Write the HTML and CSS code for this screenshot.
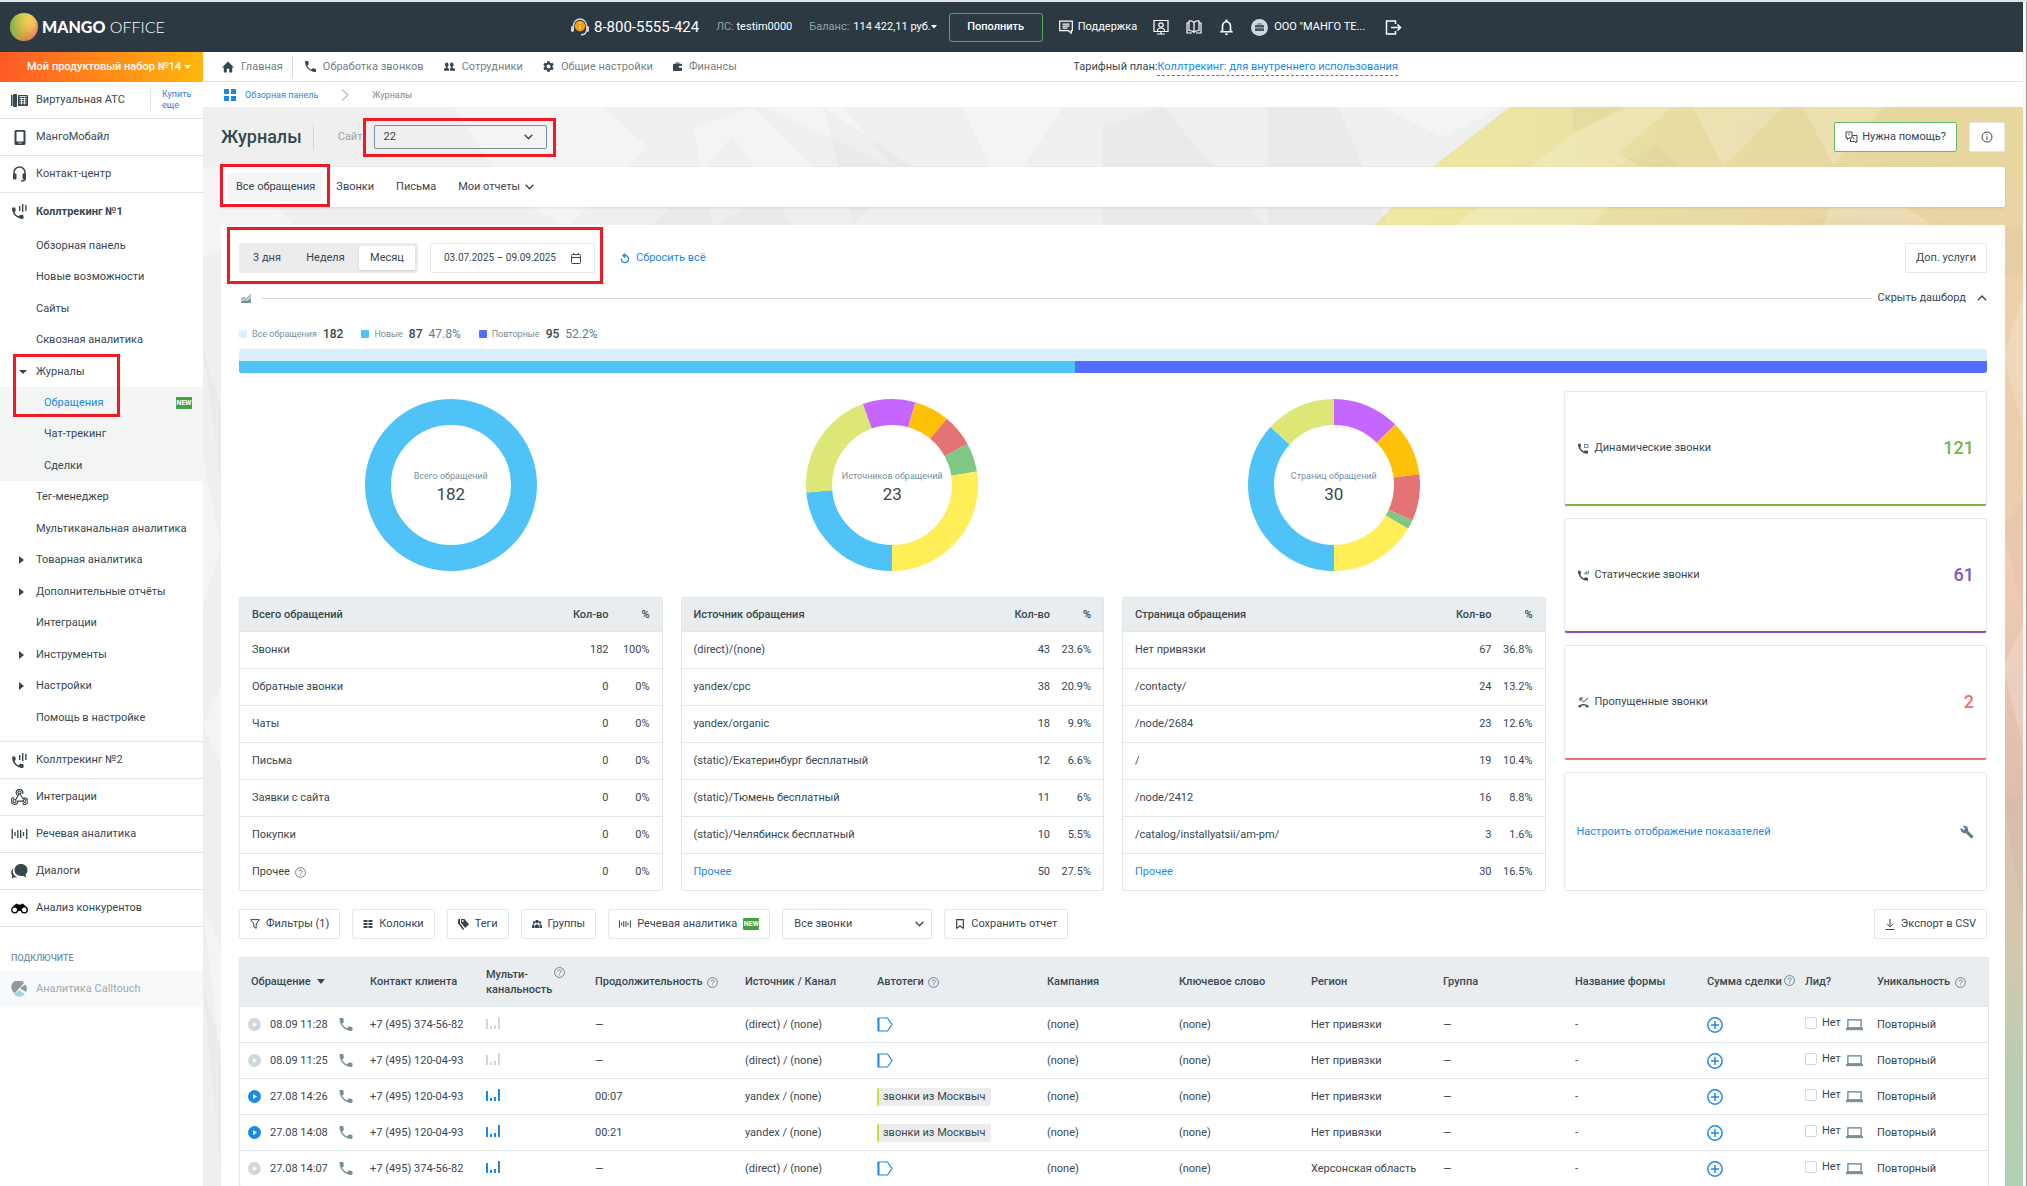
FILE: index.html
```html
<!DOCTYPE html>
<html lang="ru">
<head>
<meta charset="utf-8">
<title>Журналы</title>
<link rel="stylesheet" href="styles.css">
</head>
<body>
<svg class="sprite" aria-hidden="true">
  <symbol id="i-phone" viewBox="3 3 18 18"><path d="M6.62 10.79c1.44 2.83 3.76 5.14 6.59 6.59l2.2-2.2c.27-.27.67-.36 1.02-.24 1.12.37 2.33.57 3.57.57.55 0 1 .45 1 1V20c0 .55-.45 1-1 1-9.39 0-17-7.61-17-17 0-.55.45-1 1-1h3.5c.55 0 1 .45 1 1 0 1.25.2 2.45.57 3.57.11.35.03.74-.25 1.02l-2.2 2.2z"/></symbol>
  <symbol id="i-home" viewBox="2 3 20 18"><path d="M10 21v-6h4v6h5v-8h3L12 3 2 13h3v8z"/></symbol>
  <symbol id="i-gear" viewBox="2 2 20 20"><path d="M19.14 12.94c.04-.3.06-.61.06-.94 0-.32-.02-.64-.07-.94l2.03-1.58c.18-.14.23-.41.12-.61l-1.92-3.32c-.12-.22-.37-.29-.59-.22l-2.39.96c-.5-.38-1.03-.7-1.62-.94l-.36-2.54c-.04-.24-.24-.41-.48-.41h-3.84c-.24 0-.43.17-.47.41l-.36 2.54c-.59.24-1.13.57-1.62.94l-2.39-.96c-.22-.08-.47 0-.59.22L2.74 8.87c-.12.21-.08.47.12.61l2.03 1.58c-.05.3-.09.63-.09.94s.02.64.07.94l-2.03 1.58c-.18.14-.23.41-.12.61l1.92 3.32c.12.22.37.29.59.22l2.39-.96c.5.38 1.03.7 1.62.94l.36 2.54c.05.24.24.41.48.41h3.84c.24 0 .44-.17.47-.41l.36-2.54c.59-.24 1.13-.56 1.62-.94l2.39.96c.22.08.47 0 .59-.22l1.92-3.32c.12-.22.07-.47-.12-.61l-2.01-1.58zM12 15.6c-1.98 0-3.6-1.62-3.6-3.6s1.62-3.6 3.6-3.6 3.6 1.62 3.6 3.6-1.62 3.6-3.6 3.6z"/></symbol>
  <symbol id="i-staff" viewBox="0 0 12 10"><path d="M3 0a2 2.4 0 0 1 1 4.5V6l1.500 1V9H0V7l2-1V4.500A2 2.400 0 0 1 3 0zM8.500 0a2 2.400 0 0 1 1 4.500V6L12 7v2H6.500V7l1-1V4.500a2 2.400 0 0 1 1-4.500z"/></symbol>
  <symbol id="i-case" viewBox="0 0 10 10"><path d="M3 2V.5h4V2h2a1 1 0 0 1 1 1v1.500H6.500v2H10V9a1 1 0 0 1-1 1H1a1 1 0 0 1-1-1V3a1 1 0 0 1 1-1zM4 1.300V2h2v-.7z"/></symbol>
  <symbol id="i-grid" viewBox="0 0 12 12"><path d="M0 0h5v5H0zM7 0h5v5H7zM0 7h5v5H0zM7 7h5v5H7z"/></symbol>
  <symbol id="i-calltrack" viewBox="0 0 17 17"><path d="M3.500 9.200c.8 1.800 2.200 3.200 4 4.100l1.500-1.300c.2-.2.5-.3.8-.2.600.2 1.300.3 2 .3.400 0 .7.300.7.700v2.500c0 .4-.3.7-.7.7C6 16 1 11 1 5.300c0-.4.300-.7.700-.7h2c.4 0 .7.300.7.700 0 .7.100 1.400.3 2 .1.300 0 .6-.2.800z"/><path d="M8 3h1.400v5H8zM11 1h1.400v8H11zM14.200 2h1.400v6h-1.400z"/></symbol>
  <symbol id="i-q" viewBox="0 0 12 12"><circle cx="6" cy="6" r="5.400" fill="none" stroke="currentColor"/><path d="M4.300 4.900c0-2.300 3.500-2.200 3.500-.1C7.800 6 6.100 6 6.100 7.300M6.100 8.300v1" fill="none" stroke="currentColor"/></symbol>
  <symbol id="i-voice" viewBox="0 0 16 10"><path d="M.7 0v10M3.500 3v4M6.300 1v8M9.200 1v8M12 3v4M15.200 0v10" stroke="currentColor" stroke-width="1.300" fill="none"/></symbol>
  <symbol id="i-play" viewBox="0 0 13 13"><circle cx="6.500" cy="6.500" r="6.500"/><path d="M5 4v5l4-2.500z" fill="#fff"/></symbol>
  <symbol id="i-bars" viewBox="0 0 14 12"><path d="M0 2h2v10H0zM4 9h2v3H4zM8 8h2v4H8zM12 0h2v12h-2z"/></symbol>
  <symbol id="i-tag" viewBox="0 0 16 15"><path d="M1 1h9.500l4.500 6.500-4.500 6.500H1z" fill="none" stroke="currentColor" stroke-width="1.200"/><path d="M1 1h1.500v13H1z"/></symbol>
  <symbol id="i-plus" viewBox="0 0 16 16"><circle cx="8" cy="8" r="7.200" fill="none" stroke="currentColor" stroke-width="1.500"/><path d="M8 4v8M4 8h8" stroke="currentColor" stroke-width="1.500"/></symbol>
  <symbol id="i-laptop" viewBox="0 0 18 13"><path d="M2 1.500h14V10H2z" fill="none" stroke="currentColor" stroke-width="1.300"/><path d="M0 10h18v2.500H0z"/></symbol>
</svg>

<div class="app">
<header class="top">
  <a class="logo" href="#"><svg width="28" height="28" viewBox="0 0 28 28"><defs><radialGradient id="mg" cx=".55" cy=".2" r=".85"><stop offset="0" stop-color="#fbd84c"/><stop offset=".45" stop-color="#f3b04f"/><stop offset="1" stop-color="#d9544c"/></radialGradient><linearGradient id="mg2"><stop offset="0" stop-color="#6fb84c"/><stop offset=".6" stop-color="#c9cf45" stop-opacity=".3"/><stop offset="1" stop-color="#fff" stop-opacity="0"/></linearGradient></defs><circle cx="14" cy="14" r="14" fill="url(#mg)"/><circle cx="14" cy="14" r="14" fill="url(#mg2)"/></svg><span class="logo-text"><b>MANGO</b> OFFICE</span></a>
  <div class="top-info">
    <svg class="headset" width="18" height="18" viewBox="0 0 18 18"><path d="M2.500 9V7.500a6.500 6.500 0 0 1 13 0V9M15.500 12c0 3-2 4.800-5.500 4.800" fill="none" stroke="#cfd8dc" stroke-width="1.400"/><rect x="0" y="8" width="3" height="6" rx="1.400" fill="#cfd8dc"/><rect x="15" y="8" width="3" height="6" rx="1.400" fill="#cfd8dc"/><circle cx="9" cy="8" r="5.200" fill="#f90"/><path d="M9 4.500v1.200M9 7v4" stroke="#fff" stroke-width="1.300"/></svg>
    <span class="tel">8-800-5555-424</span>
    <span class="acc"><i>ЛС:</i> testim0000</span>
    <button class="balance" type="button"><i>Баланс:</i> <span>114 422,11 руб.</span><svg width="6" height="4" viewBox="0 0 6 4"><path d="M0 0h6L3 3.500z"/></svg></button>
    <button class="pay" type="button">Пополнить</button>
    <a class="support" href="#"><svg width="14" height="14" viewBox="0 0 14 14" fill="none" stroke="currentColor" stroke-width="1.200"><path d="M.7 1.200h12.600v9.500h-1v2.500l-3-2.500H.7zM3.500 4.200h7M3.500 6.200h7M3.500 8.200h5"/></svg>Поддержка</a>
    <a class="ico" href="#" aria-label="Обучение"><svg width="16" height="16" viewBox="0 0 16 16" fill="none" stroke="currentColor" stroke-width="1.200"><path d="M1 1.500h14v11H1zM4 15h8M8 12.500V15M4.500 12c0-4 7-4 7 0"/><circle cx="8" cy="6" r="2.200"/></svg></a>
    <a class="ico" href="#" aria-label="Справка"><svg width="16" height="14" viewBox="0 0 16 14" fill="none" stroke="currentColor" stroke-width="1.200"><path d="M8 12.500V2.500C6.500.8 4.500.8 3 1v9.500c2 0 3.800.3 5 2 1.200-1.700 3-2 5-2V1c-1.500-.2-3.500-.2-5 1.500M3 3H1v10h5M13 3h2v10h-5"/></svg></a>
    <a class="ico" href="#" aria-label="Уведомления"><svg width="15" height="16" viewBox="3 2 18 20"><path d="M12 22c1.100 0 2-.9 2-2h-4c0 1.100.89 2 2 2zm6-6v-5c0-3.070-1.640-5.640-4.500-6.320V4c0-.83-.67-1.500-1.500-1.500s-1.500.67-1.500 1.500v.68C7.630 5.360 6 7.920 6 11v5l-2 2v1h16v-1l-2-2zm-2 1H8v-6c0-2.480 1.510-4.500 4-4.500s4 2.020 4 4.500v6z"/></svg></a>
    <a class="user" href="#"><svg width="17" height="17" viewBox="0 0 17 17"><circle cx="8.500" cy="8.500" r="8.500" fill="#cfd8dc"/><path d="M4 6h2.500V4.500h4V6H13v6H4zM7.300 5.300V6h2.400v-.7zM4 8.500h9v.7H4z" fill="#455a64" fill-rule="evenodd"/></svg>ООО "МАНГО ТЕ...</a>
    <a class="exit" href="#" aria-label="Выход"><svg width="17" height="15" viewBox="0 0 17 15" fill="none" stroke="currentColor" stroke-width="1.500"><path d="M10.500 4V1H1.500v13h9v-3M6 7.500h9.500M12.500 4.500l3 3-3 3"/></svg></a>
  </div>
</header>

<aside class="side">
  <button class="product" type="button"><span>Мой продуктовый набор №14</span><svg width="7" height="4" viewBox="0 0 7 4"><path d="M0 0h7L3.500 4z"/></svg></button>
  <ul class="menu">
    <li class="menu-split"><a href="#"><svg width="17" height="13" viewBox="0 0 17 13"><rect x="0" y="1" width="1.500" height="11"/><rect x="2" y="0" width="4" height="13" rx="1"/><path d="M7 1h9a1 1 0 0 1 1 1v9a1 1 0 0 1-1 1H7z"/><path d="M8.500 4.500h7M8.500 6.700h7M8.500 9h7M10.500 3.500v7M13.500 3.500v7M8.500 2.500h7" stroke="#fff" stroke-width=".8"/></svg>Виртуальная АТС</a><a class="buy" href="#">Купить еще</a></li>
    <li><a href="#"><svg width="17" height="15" viewBox="0 0 17 15"><path d="M5 0h8a1.500 1.500 0 0 1 1.500 1.500v12A1.500 1.500 0 0 1 13 15H5a1.500 1.500 0 0 1-1.500-1.500v-12A1.500 1.500 0 0 1 5 0zm.5 1.800v9.700h7V1.800zm2 10.900v.9h3v-.9z" fill-rule="evenodd"/></svg>МангоМобайл</a></li>
    <li><a href="#"><svg width="17" height="16" viewBox="0 0 17 16"><path d="M3 9V6.500a5.500 5.500 0 0 1 11 0V13q0 2-4 2" fill="none" stroke="#37474f" stroke-width="1.500"/><rect x="2" y="7.500" width="3.500" height="6" rx="1"/><rect x="11.500" y="7.500" width="3.500" height="6" rx="1"/></svg>Контакт-центр</a></li>
    <li class="open"><a class="strong" href="#"><svg width="17" height="17"><use href="#i-calltrack"/></svg>Коллтрекинг №1</a>
      <ul class="sub">
        <li><a href="#">Обзорная панель</a></li>
        <li><a href="#">Новые возможности</a></li>
        <li><a href="#">Сайты</a></li>
        <li><a href="#">Сквозная аналитика</a></li>
        <li class="mark mark-journal"><a class="down" href="#">Журналы</a>
          <ul class="nested">
            <li><a class="current" href="#">Обращения<span class="new">NEW</span></a></li>
            <li><a href="#">Чат-трекинг</a></li>
            <li><a href="#">Сделки</a></li>
          </ul>
        </li>
        <li><a href="#">Тег-менеджер</a></li>
        <li><a href="#">Мультиканальная аналитика</a></li>
        <li><a class="right" href="#">Товарная аналитика</a></li>
        <li><a class="right" href="#">Дополнительные отчёты</a></li>
        <li><a href="#">Интеграции</a></li>
        <li><a class="right" href="#">Инструменты</a></li>
        <li><a class="right" href="#">Настройки</a></li>
        <li><a href="#">Помощь в настройке</a></li>
      </ul>
    </li>
    <li><a href="#"><svg width="17" height="17"><use href="#i-calltrack"/></svg>Коллтрекинг №2</a></li>
    <li><a href="#"><svg width="17" height="16" viewBox="0 0 17 16" fill="none" stroke="#37474f" stroke-width="1.200"><circle cx="8.500" cy="3.500" r="1.500"/><circle cx="3.500" cy="12" r="1.500"/><circle cx="13.500" cy="12" r="1.500"/><path d="M5.800 5.500A3.300 3.300 0 1 1 11.500 5M8.500 4.500l3.500 5a3.200 3.200 0 1 1-.5 5M8 5l-3.500 6M3.500 8.700a3.300 3.300 0 1 0 3.300 3.500h6.500M5.800 5.500L7 7"/></svg>Интеграции</a></li>
    <li><a href="#"><svg width="17" height="10"><use href="#i-voice"/></svg>Речевая аналитика</a></li>
    <li><a href="#"><svg width="17" height="15" viewBox="0 0 17 15"><path d="M10 0c3.600 0 6.500 2.600 6.500 6 0 2-1 3.600-2 4.500l1 3-3.500-1.800c-4.500 1-8.500-1.700-8.500-5.700 0-3.400 2.900-6 6.500-6z"/><path d="M2.500 4.500C1 7 1.500 11 6 13.200c-1 .4-2 .3-3 0L.8 14.800l.4-3C-.5 9.500 0 6 2.500 4.500z"/></svg>Диалоги</a></li>
    <li><a href="#"><svg width="17" height="11" viewBox="0 0 17 11"><path d="M3 2.500L5.500.5l1.500 1h3l1.500-1L14 2.500l1.500 2.500-5 .5V8h-4V5.500L1.500 5z" fill="#000"/><g fill="#fff" stroke="#000" stroke-width="1.300"><circle cx="3.700" cy="6.800" r="3"/><circle cx="13.300" cy="6.800" r="3"/></g></svg>Анализ конкурентов</a></li>
  </ul>
  <h2 class="side-title">Подключите</h2>
  <a class="connect" href="#"><svg width="17" height="16" viewBox="0 0 17 16"><path d="M1.500 10A7 7 0 0 1 13 2L3.500 12.500z" fill="#8f9a9f"/><path d="M14.500 3.500A7 7 0 0 1 14.800 11L9 7z" fill="#8f9a9f"/><path d="M8.500 9l5.500 4.500q-5.500 4.500-11 0z" fill="#9fd4e4"/></svg>Аналитика Calltouch</a>
</aside>

<div class="content">
  <nav class="nav">
    <a class="first" href="#"><svg width="12" height="12"><use href="#i-home"/></svg>Главная</a>
    <a href="#"><svg width="11" height="11"><use href="#i-phone"/></svg>Обработка звонков</a>
    <a href="#"><svg width="11" height="10"><use href="#i-staff"/></svg>Сотрудники</a>
    <a href="#"><svg width="11" height="11"><use href="#i-gear"/></svg>Общие настройки</a>
    <a href="#"><svg width="9" height="9"><use href="#i-case"/></svg>Финансы</a>
    <p class="plan">Тарифный план:<a href="#">Коллтрекинг: для внутреннего использования</a></p>
  </nav>
  <nav class="crumbs">
    <a href="#"><svg width="12" height="12"><use href="#i-grid"/></svg>Обзорная панель</a>
    <svg width="8" height="12" viewBox="0 0 8 12"><path d="M1 .5L7 6l-6 5.500" fill="none" stroke="#b0bec5" stroke-width="1.200"/></svg>
    <span>Журналы</span>
  </nav>
  <main class="stage">
    <svg class="poly" viewBox="0 0 1820 1080" preserveAspectRatio="none" aria-hidden="true">
      <defs>
        <linearGradient id="warm" x1="0" y1="0" x2="0" y2="1"><stop offset="0" stop-color="#e6d89c"/><stop offset=".15" stop-color="#ecd2a8"/><stop offset=".45" stop-color="#eecab2"/><stop offset=".62" stop-color="#e0bfae"/><stop offset=".78" stop-color="#d3c8ae"/><stop offset=".9" stop-color="#b9cdb0"/><stop offset="1" stop-color="#b0d0b4"/></linearGradient>
        <linearGradient id="lemon"><stop offset="0" stop-color="#f1eca0"/><stop offset=".4" stop-color="#ebe3a4"/><stop offset="1" stop-color="#e6d4a0" stop-opacity="0"/></linearGradient>
      </defs>
      <rect width="1820" height="1080" fill="#efefef"/>
      <path d="M1307 0h513v1080H1000L1172 118L1230 60z" fill="url(#warm)"/>
      <path d="M1307 0h500v300H1050L1172 118L1230 60z" fill="url(#lemon)"/>
      <g fill="#fff" opacity=".3">
        <path d="M250 0l150 0 45 40-80 80-55-30zM0 60l40 0 60 70-100 20zM490 20l60-20 60 60-100 60zM760 0l40 90 60-90zM1180 0h120l-60 30zM560 0h80l50 60zM0 350l18 90-18 60zM0 620l18-40v80zM0 800l18 40v120z"/>
      </g>
      <g fill="#000" opacity=".02">
        <path d="M450 118l80-90 60 90zM620 0l90 60-60 58zM900 20l60-20 100 118h-160zM1065 0h70l50 120h-120zM1370 0h60l-60 27zM1410 60l45-22 40 40-90-8zM1350 120l20 60h120l-20-60zM1560 130l60-20 200 10v50h-270zM1800 420l20-30v120zM1800 690h20v120zM0 240l18 60v80zM0 880l18 60v130z"/>
      </g>
      <g fill="#fff" opacity=".18">
        <path d="M1370 27l50-27h50l-60 50zM1490 0l30 60 60-60zM1600 0h80l-50 58zM1250 120l120-93 75 35-60 58zM1640 60l90 58h-110zM1800 250l20-60v130zM1800 560l20-40v120z"/>
      </g>
    </svg>
    <div class="title-row">
      <h1>Журналы</h1>
      <label class="site">Сайт <span class="mark mark-site"><select><option>22</option></select></span></label>
      <button class="btn help" type="button"><svg width="13" height="13" viewBox="0 0 13 13" fill="none" stroke="#37474f"><path d="M1 1h6v6H4L2.500 8.500V7H1zM7.500 4.500H12v6h-1V12l-1.500-1.500H5.500V8M4 2.500v2M8.800 6.500v2"/></svg>Нужна помощь?</button>
      <button class="btn info" type="button" aria-label="Информация"><svg width="12" height="12" viewBox="0 0 12 12"><circle cx="6" cy="6" r="5" fill="none" stroke="#37474f"/><path d="M6 3v1M6 5.200V9" stroke="#37474f"/></svg></button>
    </div>
    <nav class="tabs">
      <a class="on mark mark-tab" href="#">Все обращения</a>
      <a href="#">Звонки</a>
      <a href="#">Письма</a>
      <a href="#">Мои отчеты<svg width="9" height="6" viewBox="0 0 9 6"><path d="M.7.7l3.800 4L8.300.7" fill="none" stroke="#37474f" stroke-width="1.300"/></svg></a>
    </nav>

    <section class="panel">
      <div class="period">
        <div class="mark mark-period">
          <div class="seg"><button type="button">3 дня</button><button type="button">Неделя</button><button class="on" type="button">Месяц</button></div>
          <label class="date"><input type="text" value="03.07.2025 – 09.09.2025" aria-label="Период"><svg width="10" height="11" viewBox="0 0 10 11" fill="none" stroke="#37474f"><rect x=".5" y="1.500" width="9" height="9" rx="1"/><path d="M.5 4.500h9M2.500 0v2M7.500 0v2"/></svg></label>
        </div>
        <button class="reset" type="button"><svg width="10" height="11" viewBox="0 0 10 11" fill="none" stroke="currentColor" stroke-width="1.300"><path d="M1.500 5.500A3.600 3.600 0 1 0 5 2.500H3M5 .5L3 2.500l2 2"/></svg>Сбросить всё</button>
        <button class="btn extra" type="button">Доп. услуги</button>
      </div>
      <div class="fold">
        <svg width="10" height="10" viewBox="0 0 10 10"><path d="M0 5l3-1.500L5 5l5-4.500V4L5.500 7.500l-2-1L0 8z" fill="#b0bec5"/><path d="M0 8.500L3.500 7l2 1L10 5v5H0z" fill="#78909c"/></svg>
        <span class="rule"></span>
        <button type="button">Скрыть дашборд<svg width="10" height="6" viewBox="0 0 10 6"><path d="M1 5.300l4-4.300 4 4.300" fill="none" stroke="#37474f" stroke-width="1.300"/></svg></button>
      </div>
      <div class="legend">
        <p><i class="c-all"></i>Все обращения<b>182</b></p>
        <p><i class="c-new"></i>Новые<b>87</b><em>47.8%</em></p>
        <p><i class="c-rep"></i>Повторные<b>95</b><em>52.2%</em></p>
      </div>
      <div class="bars"><div class="bar-all"></div><div class="bar-split"><span style="width:47.8%"></span></div></div>

      <div class="dash">
        <div class="col">
          <div class="donut"><svg width="172" height="172" viewBox="0 0 172 172"><circle cx="86" cy="86" r="73" stroke="#4fc3f7"/></svg><p>Всего обращений<b>182</b></p></div>
          <table class="stat">
            <thead><tr><th>Всего обращений</th><th>Кол-во</th><th>%</th></tr></thead>
            <tbody>
            <tr><td>Звонки</td><td>182</td><td>100%</td></tr>
            <tr><td>Обратные звонки</td><td>0</td><td>0%</td></tr>
            <tr><td>Чаты</td><td>0</td><td>0%</td></tr>
            <tr><td>Письма</td><td>0</td><td>0%</td></tr>
            <tr><td>Заявки с сайта</td><td>0</td><td>0%</td></tr>
            <tr><td>Покупки</td><td>0</td><td>0%</td></tr>
            <tr><td>Прочее <svg class="q"><use href="#i-q"/></svg></td><td>0</td><td>0%</td></tr>
            </tbody>
          </table>
        </div>
        <div class="col">
          <div class="donut"><svg width="172" height="172" viewBox="0 0 172 172"><g transform="rotate(90 86 86)">
            <circle cx="86" cy="86" r="73" pathLength="100" stroke="#4fc3f7" stroke-dasharray="23.6 100"/>
            <circle cx="86" cy="86" r="73" pathLength="100" stroke="#dce775" stroke-dasharray="20.9 100" stroke-dashoffset="-23.6"/>
            <circle cx="86" cy="86" r="73" pathLength="100" stroke="#c566ff" stroke-dasharray="9.9 100" stroke-dashoffset="-44.5"/>
            <circle cx="86" cy="86" r="73" pathLength="100" stroke="#ffc107" stroke-dasharray="6.6 100" stroke-dashoffset="-54.4"/>
            <circle cx="86" cy="86" r="73" pathLength="100" stroke="#e57373" stroke-dasharray="6 100" stroke-dashoffset="-61"/>
            <circle cx="86" cy="86" r="73" pathLength="100" stroke="#81c784" stroke-dasharray="5.5 100" stroke-dashoffset="-67"/>
            <circle cx="86" cy="86" r="73" pathLength="100" stroke="#ffee58" stroke-dasharray="27.5 100" stroke-dashoffset="-72.5"/>
          </g></svg><p>Источников обращений<b>23</b></p></div>
          <table class="stat">
            <thead><tr><th>Источник обращения</th><th>Кол-во</th><th>%</th></tr></thead>
            <tbody>
            <tr><td>(direct)/(none)</td><td>43</td><td>23.6%</td></tr>
            <tr><td>yandex/cpc</td><td>38</td><td>20.9%</td></tr>
            <tr><td>yandex/organic</td><td>18</td><td>9.9%</td></tr>
            <tr><td>(static)/Екатеринбург бесплатный</td><td>12</td><td>6.6%</td></tr>
            <tr><td>(static)/Тюмень бесплатный</td><td>11</td><td>6%</td></tr>
            <tr><td>(static)/Челябинск бесплатный</td><td>10</td><td>5.5%</td></tr>
            <tr><td><a href="#">Прочее</a></td><td>50</td><td>27.5%</td></tr>
            </tbody>
          </table>
        </div>
        <div class="col">
          <div class="donut"><svg width="172" height="172" viewBox="0 0 172 172"><g transform="rotate(90 86 86)">
            <circle cx="86" cy="86" r="73" pathLength="100" stroke="#4fc3f7" stroke-dasharray="36.8 100"/>
            <circle cx="86" cy="86" r="73" pathLength="100" stroke="#dce775" stroke-dasharray="13.2 100" stroke-dashoffset="-36.8"/>
            <circle cx="86" cy="86" r="73" pathLength="100" stroke="#c566ff" stroke-dasharray="12.6 100" stroke-dashoffset="-50"/>
            <circle cx="86" cy="86" r="73" pathLength="100" stroke="#ffc107" stroke-dasharray="10.4 100" stroke-dashoffset="-62.6"/>
            <circle cx="86" cy="86" r="73" pathLength="100" stroke="#e57373" stroke-dasharray="8.8 100" stroke-dashoffset="-73"/>
            <circle cx="86" cy="86" r="73" pathLength="100" stroke="#81c784" stroke-dasharray="1.700 100" stroke-dashoffset="-81.8"/>
            <circle cx="86" cy="86" r="73" pathLength="100" stroke="#ffee58" stroke-dasharray="16.500 100" stroke-dashoffset="-83.500"/>
          </g></svg><p>Страниц обращений<b>30</b></p></div>
          <table class="stat">
            <thead><tr><th>Страница обращения</th><th>Кол-во</th><th>%</th></tr></thead>
            <tbody>
            <tr><td>Нет привязки</td><td>67</td><td>36.8%</td></tr>
            <tr><td>/contacty/</td><td>24</td><td>13.2%</td></tr>
            <tr><td>/node/2684</td><td>23</td><td>12.6%</td></tr>
            <tr><td>/</td><td>19</td><td>10.4%</td></tr>
            <tr><td>/node/2412</td><td>16</td><td>8.8%</td></tr>
            <tr><td>/catalog/installyatsii/am-pm/</td><td>3</td><td>1.6%</td></tr>
            <tr><td><a href="#">Прочее</a></td><td>30</td><td>16.5%</td></tr>
            </tbody>
          </table>
        </div>
        <div class="kpis">
          <div class="kpi green"><svg width="11" height="11" viewBox="0 0 11 11"><path d="M2.200 4.500c.7 1.800 2 3.200 3.800 4l1-1.200L10 8v2.500C4.500 11 0 6.500 0 .7h2.500l.5 2.800z"/><path d="M6 1h4.500v4H6zM7 2v2h2.500V2z" fill="#78909c"/></svg>Динамические звонки<b>121</b></div>
          <div class="kpi violet"><svg width="11" height="11" viewBox="0 0 11 11"><path d="M2.200 4.500c.7 1.800 2 3.200 3.800 4l1-1.200L10 8v2.500C4.500 11 0 6.500 0 .7h2.500l.5 2.800z"/><path d="M5.500 4l4-3.500v4zM10 .5h.8v4H10z" fill="#78909c"/></svg>Статические звонки<b>61</b></div>
          <div class="kpi red"><svg width="11" height="11" viewBox="0 0 11 11"><path d="M0 9.500C2 6 9 6 11 9.500l-1.500 1.300L7.500 9.500V8.400h-4v1.100l-2 1.300z"/><path d="M2 4V1h3M2 1l3.500 4L10 .8" fill="none" stroke="#37474f"/></svg>Пропущенные звонки<b>2</b></div>
          <div class="kpi"><a href="#">Настроить отображение показателей</a><svg class="wrench" width="14" height="14" viewBox="0 0 24 24"><path d="M22.700 19l-9.100-9.100c.9-2.300.4-5-1.500-6.900-2-2-5-2.400-7.400-1.300L9 6 6 9 1.600 4.700C.4 7.100.9 10.100 2.900 12.100c1.900 1.900 4.600 2.400 6.900 1.500l9.100 9.100c.4.4 1 .4 1.400 0l2.300-2.300c.5-.4.5-1.100.1-1.400z"/></svg></div>
        </div>
      </div>

      <div class="tools">
        <button class="btn" type="button"><svg width="10" height="10" viewBox="0 0 10 10"><path d="M.7.6h8.600L6.200 5v4.300L3.800 8V5z" fill="none" stroke="#37474f"/></svg>Фильтры (1)</button>
        <button class="btn" type="button"><svg width="10" height="10" viewBox="0 0 10 10"><path d="M.5 1h4v2h-4zM5.500 1h4v2h-4zM.5 4h4v2h-4zM5.500 4h4v2h-4zM.5 7h4v2h-4zM5.500 7h4v2h-4z"/></svg>Колонки</button>
        <button class="btn" type="button"><svg width="11" height="11" viewBox="0 0 11 11"><path d="M0 1v3.500l5 6.500 1.200-1L2 4.500V0H1a1 1 0 0 0-1 1z"/><path d="M3 0h3.500L11 5.200 7.200 9 3 4z"/><circle cx="4.800" cy="1.900" r=".9" fill="#fff"/></svg>Теги</button>
        <button class="btn" type="button"><svg width="10" height="10" viewBox="0 0 10 10"><circle cx="2" cy="3.500" r="1.300"/><circle cx="8" cy="3.500" r="1.300"/><circle cx="5" cy="2.500" r="1.800"/><path d="M0 7.500c0-2 1.500-2.300 2.500-2.200L2 9H0zM10 7.500c0-2-1.500-2.300-2.500-2.200L8 9h2zM2.500 9c0-5 5-5 5 0z"/></svg>Группы</button>
        <button class="btn" type="button"><svg width="12" height="8"><use href="#i-voice"/></svg>Речевая аналитика<span class="new">NEW</span></button>
        <select class="calls" aria-label="Тип звонков"><option>Все звонки</option></select>
        <button class="btn" type="button"><svg width="10" height="10" viewBox="0 0 10 10"><path d="M1.700.6h6.600v8.600L5 7 1.700 9.200z" fill="none" stroke="#37474f" stroke-width="1.200"/></svg>Сохранить отчет</button>
        <button class="btn export" type="button"><svg width="10" height="11" viewBox="0 0 10 11" fill="none" stroke="#37474f"><path d="M5 0v7.500M2 4.800l3 3 3-3M.5 10.500h9"/></svg>Экспорт в CSV</button>
      </div>

      <table class="log">
        <colgroup><col class="w119"><col class="w116"><col class="w109"><col class="w150"><col class="w132"><col class="w170"><col class="w132"><col class="w132"><col class="w132"><col class="w132"><col class="w132"><col class="w98"><col class="w72"><col class="w122"></colgroup>
        <thead><tr>
          <th>Обращение <svg class="sort" width="8" height="5" viewBox="0 0 8 5"><path d="M0 0h8L4 5z"/></svg></th><th>Контакт клиента</th><th><span class="multi"><span>Мульти-канальность</span><svg class="q"><use href="#i-q"/></svg></span></th><th>Продолжительность <svg class="q"><use href="#i-q"/></svg></th><th>Источник / Канал</th><th>Автотеги <svg class="q"><use href="#i-q"/></svg></th><th>Кампания</th><th>Ключевое слово</th><th>Регион</th><th>Группа</th><th>Название формы</th><th class="tight">Сумма сделки<svg class="q"><use href="#i-q"/></svg></th><th>Лид?</th><th>Уникальность <svg class="q"><use href="#i-q"/></svg></th>
        </tr></thead>
        <tbody>
        <tr><td><span class="when"><svg class="play"><use href="#i-play"/></svg><span>08.09 11:28</span><svg class="ph"><use href="#i-phone"/></svg></span></td><td>+7 (495) 374-56-82</td><td><svg class="mc off"><use href="#i-bars"/></svg></td><td>—</td><td>(direct) / (none)</td><td><svg class="tagi"><use href="#i-tag"/></svg></td><td>(none)</td><td>(none)</td><td>Нет привязки</td><td>—</td><td>-</td><td><svg class="plus"><use href="#i-plus"/></svg></td><td><span class="lead"><label><input type="checkbox">Нет</label><svg><use href="#i-laptop"/></svg></span></td><td>Повторный</td></tr>
        <tr><td><span class="when"><svg class="play"><use href="#i-play"/></svg><span>08.09 11:25</span><svg class="ph"><use href="#i-phone"/></svg></span></td><td>+7 (495) 120-04-93</td><td><svg class="mc off"><use href="#i-bars"/></svg></td><td>—</td><td>(direct) / (none)</td><td><svg class="tagi"><use href="#i-tag"/></svg></td><td>(none)</td><td>(none)</td><td>Нет привязки</td><td>—</td><td>-</td><td><svg class="plus"><use href="#i-plus"/></svg></td><td><span class="lead"><label><input type="checkbox">Нет</label><svg><use href="#i-laptop"/></svg></span></td><td>Повторный</td></tr>
        <tr><td><span class="when"><svg class="play ready"><use href="#i-play"/></svg><span>27.08 14:26</span><svg class="ph"><use href="#i-phone"/></svg></span></td><td>+7 (495) 120-04-93</td><td><svg class="mc"><use href="#i-bars"/></svg></td><td>00:07</td><td>yandex / (none)</td><td><span class="chip">звонки из Москвыч</span></td><td>(none)</td><td>(none)</td><td>Нет привязки</td><td>—</td><td>-</td><td><svg class="plus"><use href="#i-plus"/></svg></td><td><span class="lead"><label><input type="checkbox">Нет</label><svg><use href="#i-laptop"/></svg></span></td><td>Повторный</td></tr>
        <tr><td><span class="when"><svg class="play ready"><use href="#i-play"/></svg><span>27.08 14:08</span><svg class="ph"><use href="#i-phone"/></svg></span></td><td>+7 (495) 120-04-93</td><td><svg class="mc"><use href="#i-bars"/></svg></td><td>00:21</td><td>yandex / (none)</td><td><span class="chip">звонки из Москвыч</span></td><td>(none)</td><td>(none)</td><td>Нет привязки</td><td>—</td><td>-</td><td><svg class="plus"><use href="#i-plus"/></svg></td><td><span class="lead"><label><input type="checkbox">Нет</label><svg><use href="#i-laptop"/></svg></span></td><td>Повторный</td></tr>
        <tr><td><span class="when"><svg class="play"><use href="#i-play"/></svg><span>27.08 14:07</span><svg class="ph"><use href="#i-phone"/></svg></span></td><td>+7 (495) 374-56-82</td><td><svg class="mc"><use href="#i-bars"/></svg></td><td>—</td><td>(direct) / (none)</td><td><svg class="tagi"><use href="#i-tag"/></svg></td><td>(none)</td><td>(none)</td><td>Херсонская область</td><td>—</td><td>-</td><td><svg class="plus"><use href="#i-plus"/></svg></td><td><span class="lead"><label><input type="checkbox">Нет</label><svg><use href="#i-laptop"/></svg></span></td><td>Повторный</td></tr>
        </tbody>
      </table>
    </section>
  </main>
</div>
<div class="scroll"></div>
</div>
</body>
</html>
```
FILE: styles.css
```css
*, *::before, *::after { box-sizing: border-box; margin: 0; padding: 0; }
body { font: 11px/14px Roboto, "Noto Sans", sans-serif; color: #37474f; background: #fff; }
a { color: inherit; text-decoration: none; }
button, input, select { font: inherit; color: inherit; }
button { background: none; border: 0; cursor: pointer; }
ul { list-style: none; }
i, em { font-style: normal; }
svg { fill: #37474f; flex: none; display: block; }
svg[fill="none"] { fill: none; }
.sprite { position: absolute; width: 0; height: 0; }

.app { display: grid; grid-template: auto minmax(0, 1fr) / 203px minmax(0, 1fr) 4px; height: 100vh; overflow: hidden; border-top: 2px solid #dfe4e6; }

/* header */
.top { grid-column: 1 / 3; height: 50px; background: #2c3943; color: #fff; display: flex; align-items: center; }
.top svg { fill: currentColor; }
.top svg[fill="none"] { fill: none; }
.logo { display: flex; align-items: center; gap: 4px; padding-left: 10px; width: 571px; }
.logo-text { font: 300 16px/20px Lato, sans-serif; }
.logo-text b { font-weight: 900; }
.top-info { display: flex; align-items: center; white-space: nowrap; }
.tel { font-size: 15px; margin: 0 17px 0 5px; }
.top i { color: #90a4ae; }
.acc { margin-right: 17px; }
.balance { display: flex; align-items: center; gap: 4px; }
.balance span { margin-right: -4px; }
.pay { width: 94px; height: 29px; border: 1px solid #4caf50; border-radius: 3px; margin: 0 16px 0 12px; font-weight: 500; }
.support { display: flex; align-items: center; gap: 5px; margin-right: 16px; }
.ico { margin-right: 17px; }
.user { display: flex; align-items: center; gap: 6px; margin-right: 20px; }
.scroll { grid-column: 3; grid-row: 1 / 3; background: #f7f7f7; border-right: 1px solid #9b9b9b; }

/* sidebar */
.side { overflow: hidden; background: #fff; }
.product { width: 100%; height: 30px; padding: 0 12px 0 27px; display: flex; align-items: center; justify-content: space-between; gap: 3px; background: linear-gradient(90deg, #ff5a26, #ffb70d); color: #fff; font-weight: 500; white-space: nowrap; }
.product svg { fill: #fff; }
.menu > li { border-bottom: 1px solid #dfe4e8; }
.menu > li > a { display: flex; align-items: center; gap: 8px; height: 36px; padding-left: 11px; }
.menu .open > a { height: 37px; }
.menu .strong { font-weight: 700; }
.menu-split { display: flex; align-items: center; justify-content: space-between; }
.menu .menu-split .buy { display: block; height: 22px; width: 53px; padding-left: 11px; border-left: 1px solid #dfe4e8; font-size: 9px; line-height: 11px; color: #3c7fc0; }
.sub { padding-bottom: 8px; }
.sub a { display: flex; align-items: center; height: 31px; padding-left: 36px; }
.sub > li:nth-child(even) > a { height: 32px; }
.nested { background: #f3f4f4; }
.sub .nested a { padding: 0 11px 0 44px; justify-content: space-between; }
.nested li:nth-child(even) a { height: 32px; }
.nested .current { color: #1e88e5; }
.sub .down, .sub .right { padding-left: 19px; gap: 9px; }
.down::before { content: ""; border: 4px solid transparent; border-top-color: #37474f; border-bottom: 0; }
.right::before { content: ""; border: 4px solid transparent; border-left: 5px solid #37474f; border-right: 0; margin-right: 3px; }
.new { font: 700 7px/12px Roboto, sans-serif; width: 16px; height: 12px; border-radius: 1px; background: #43a047; color: #fff; text-align: center; }
.side-title { font-size: 9px; line-height: 12px; font-weight: 500; text-transform: uppercase; color: #78909c; padding: 25px 0 7px 11px; }
.connect { display: flex; align-items: center; gap: 8px; height: 36px; padding-left: 11px; background: #f7f9fb; color: #9ea9af; }

/* navigation over the content */
.content { display: flex; flex-direction: column; min-width: 0; min-height: 0; }
.nav { display: flex; align-items: center; height: 30px; padding-left: 19px; background: #fff; border-bottom: 1px solid #e4e4e4; color: #757f85; white-space: nowrap; flex: none; }
.nav > a { display: flex; align-items: center; gap: 7px; margin-right: 20px; }
.nav > .first { margin-right: 12px; padding-right: 9px; height: 22px; border-right: 1px solid #cfd8dc; }
.plan { margin-left: auto; margin-right: 625px; color: #37474f; }
.plan a { color: #1e88e5; border-bottom: 1px dashed #1e88e5; padding-bottom: 2px; }
.crumbs { display: flex; align-items: center; height: 25px; padding-left: 21px; gap: 23px; background: #fff; font-size: 9px; color: #78858c; flex: none; }
.crumbs a { display: flex; align-items: center; gap: 9px; color: #1e88e5; }
.crumbs a svg { fill: #1e88e5; }

/* page body */
.stage { position: relative; flex: 1; min-height: 0; padding: 0 18px; isolation: isolate; }
.poly { position: absolute; inset: 0; width: 100%; height: 100%; z-index: -1; }
.title-row { display: flex; align-items: center; height: 60px; }
h1 { font-size: 18px; line-height: 24px; font-weight: 500; padding-right: 11px; border-right: 1px solid #cfd3d6; margin-right: 24px; }
.site { display: flex; align-items: center; gap: 12px; color: #90a4ae; margin-right: auto; }
select { appearance: none; border: 1px solid #78909c; border-radius: 2px; color: #37474f; background: no-repeat right 13px center url("data:image/svg+xml,%3Csvg xmlns='http://www.w3.org/2000/svg' width='9' height='6'%3E%3Cpath d='M.7.7l3.800 4L8.300.7' fill='none' stroke='%2337474f' stroke-width='1.300'/%3E%3C/svg%3E"); }
.site select { display: block; width: 173px; height: 24px; padding-left: 8px; }
.btn { display: flex; align-items: center; justify-content: center; gap: 8px; height: 30px; padding: 0 10px; background: #fff; border: 1px solid #e4e8eb; border-radius: 2px; white-space: nowrap; }
.help { border-color: #66bb6a; gap: 4px; margin-right: 12px; }
.info { width: 36px; padding: 0; }
.tabs { display: flex; align-items: center; height: 40px; padding: 0 6px; background: #fff; border-radius: 2px; box-shadow: 0 1px 3px #0000001a; margin-bottom: 18px; }
.tabs a { display: flex; align-items: center; gap: 5px; height: 28px; margin-right: 22px; }
.tabs .on { padding: 0 7px 0 9px; background: #f3f4f4; border-radius: 2px; margin-right: 14px; }
.panel { background: #fff; border-radius: 2px; padding: 18px; min-height: 960px; }

.period { display: flex; align-items: center; }
.mark { position: relative; }
.mark::after { content: ""; position: absolute; border: 3px solid #ed1c24; pointer-events: none; }
.mark-site::after { inset: -7px -9px -8px -11px; }
.mark-tab::after { inset: -9px -8px -6px -7px; }
.mark-period::after { inset: -16px -8px -11px -12px; }
.mark-journal::after { left: 13px; top: -2px; width: 107px; height: 63px; }
.mark-period { display: flex; gap: 12px; margin-right: 25px; }
.seg { display: flex; padding: 3px; background: #ececec; border-radius: 2px; }
.seg button { height: 24px; width: 56px; }
.seg button:first-child { width: 50px; }
.seg button:nth-child(2) { width: 67px; }
.seg .on { background: #fff; border-radius: 2px; box-shadow: 0 1px 2px #0000001f; }
.date { display: flex; align-items: center; width: 165px; height: 30px; padding: 0 13px; border: 1px solid #e4e8eb; border-radius: 2px; justify-content: space-between; }
.date input { width: 122px; border: 0; background: none; outline: 0; font-size: 10px; }
.reset { display: flex; align-items: center; gap: 6px; color: #1e88e5; }
.extra { margin-left: auto; }
.fold { display: flex; align-items: center; height: 14px; margin-top: 18px; padding-left: 2px; }
.fold .rule { flex: 1; border-top: 1px solid #d5dadd; margin: 1px 6px 0 11px; }
.fold button { display: flex; align-items: center; gap: 11px; }
.legend { display: flex; gap: 18px; margin: 21px 0 7px; font-size: 9px; color: #78909c; }
.legend p { display: flex; align-items: center; height: 16px; }
.legend i { width: 8px; height: 8px; border-radius: 1px; margin-right: 5px; }
.legend b, .legend em { font-size: 12px; font-weight: 500; margin-left: 6px; }
.legend em { font-weight: 400; color: #607d8b; }
.legend b { color: #37474f; }
.c-all, .bar-all { background: #daf1fd; }
.c-new { background: #4fc3f7; }
.c-rep { background: #536dfe; }
.bars { border-radius: 3px; overflow: hidden; }
.bar-all { height: 12px; }
.bar-split { height: 12px; background: #536dfe; }
.bar-split span { display: block; height: 100%; background: #4fc3f7; }

.dash { display: grid; grid-template-columns: repeat(4, minmax(0, 1fr)); gap: 18px; padding-top: 18px; }
.donut { display: grid; place-items: center; padding: 8px 0 26px; }
.donut > * { grid-area: 1 / 1; }
.donut circle { fill: none; stroke-width: 26; }
.donut p { text-align: center; font-size: 9px; line-height: 12px; color: #78909c; padding-top: 5px; }
.donut b { display: block; font-size: 17px; line-height: 24px; font-weight: 400; color: #37474f; }
.stat, .log { width: 100%; border-collapse: separate; border-spacing: 0; border: 1px solid #e1e6e9; border-radius: 2px; }
.stat th, .log th { background: #e9edf0; font-weight: 500; text-align: left; }
.stat th { height: 33px; }
.stat td { height: 37px; border-top: 1px solid #e1e6e9; }
.stat th:first-child, .stat td:first-child { padding-left: 12px; }
.stat th:not(:first-child), .stat td:not(:first-child) { text-align: right; width: 60px; }
.stat th:last-child, .stat td:last-child { padding-right: 12px; width: 53px; }
.stat a, .kpi a { color: #1e88e5; }
.q { display: inline-block; width: 11px; height: 11px; vertical-align: -3px; margin-left: 2px; color: #607d8b; }
.kpis { display: grid; grid-template-rows: repeat(3, 115px) 1fr; gap: 12px; }
.kpi { display: flex; align-items: center; gap: 6px; padding: 0 12px 0 13px; border: 1px solid #e4e8eb; border-radius: 3px; box-shadow: 0 1px 3px #0000000a; }
.kpi b { margin-left: auto; font-size: 18px; font-weight: 500; }
.kpi .wrench { margin-left: auto; fill: #607d8b; }
.kpi a { margin-left: -1px; }
.green { border-bottom: 2px solid #7cb342; } .green b { color: #7cb342; }
.violet { border-bottom: 2px solid #7e57c2; } .violet b { color: #7e57c2; }
.red { border-bottom: 2px solid #e57373; } .red b { color: #e57373; }

.tools { display: flex; gap: 12px; margin: 18px 0; }
.tools .btn { gap: 6px; }
.calls { width: 150px; height: 30px; padding-left: 11px; border-color: #dfe4e8; background-position: right 7px center; }
.tools .export { margin-left: auto; }

.log { table-layout: fixed; }
.log th { height: 48px; padding-left: 11px; white-space: nowrap; }
.log td { height: 36px; padding-left: 11px; border-top: 1px solid #e1e6e9; white-space: nowrap; }
.log td:first-child { padding-left: 8px; }
.sort { display: inline-block; vertical-align: 1px; margin-left: 4px; }
.multi { display: flex; gap: 1px; line-height: 15px; }
.multi span { width: 65px; white-space: normal; }
.when { display: flex; align-items: center; }
.when span { width: 69px; margin-left: 9px; }
.play { width: 13px; height: 13px; fill: #cfd8dc; }
.ready { fill: #1e88e5; }
.ph { width: 14px; height: 13px; fill: #78909c; }
.mc { width: 14px; height: 12px; fill: #1e88e5; margin-bottom: 4px; }
.mc.off { fill: #cfd8dc; }
.tagi { width: 16px; height: 15px; color: #1e88e5; fill: #1e88e5; }
.plus { width: 16px; height: 16px; color: #1e88e5; }
.chip { display: inline-block; padding: 0 5px 0 4px; line-height: 18px; background: #ececec; border-left: 2px solid #cddc39; border-radius: 2px; }
.tight .q { margin-left: 2px; vertical-align: -1px; }
.lead { display: flex; align-items: center; gap: 5px; }
.lead label { display: flex; align-items: center; gap: 5px; margin-bottom: 4px; }
.lead input { appearance: none; width: 12px; height: 12px; border: 1px solid #cfd8dc; border-radius: 2px; background: #fff; }
.lead svg { width: 17px; height: 13px; color: #607d8b; fill: #78909c; }
.w72 { width: 72px; } .w98 { width: 98px; } .w109 { width: 109px; } .w116 { width: 116px; } .w119 { width: 119px; }
.w122 { width: 122px; } .w132 { width: 132px; } .w150 { width: 150px; } .w170 { width: 170px; }
```
